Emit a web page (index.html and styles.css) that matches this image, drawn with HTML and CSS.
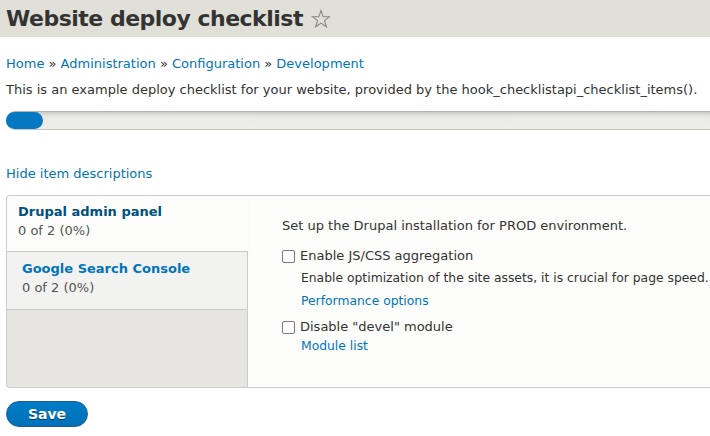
FILE: index.html
```html
<!DOCTYPE html>
<html>
<head>
<meta charset="utf-8">
<link rel="stylesheet" href="styles.css">
</head>
<body>
<div class="page">
  <header class="page-header">
    <h1 class="page-title">Website deploy checklist</h1>
    <svg class="star" width="20" height="20" viewBox="0 0 20 20"><path d="M10 1.5 L12.2 7.6 L18.6 7.7 L13.5 11.6 L15.4 17.8 L10 14.1 L4.6 17.8 L6.5 11.6 L1.4 7.7 L7.8 7.6 Z" fill="none" stroke="#8a8a86" stroke-width="1.1" stroke-linejoin="miter"/></svg>
  </header>
  <main class="content">
    <nav class="breadcrumb">
      <a href="#">Home</a> » <a href="#">Administration</a> » <a href="#">Configuration</a> » <a href="#">Development</a>
    </nav>
    <p class="intro">This is an example deploy checklist for your website, provided by the hook_checklistapi_checklist_items().</p>
    <div class="progress"><div class="progress-fill"></div></div>
    <a class="toggle" href="#">Hide item descriptions</a>
    <div class="vtabs">
      <ul class="vtabs-menu">
        <li class="vtab selected">
          <a href="#" class="vtab-title">Drupal admin panel</a>
          <span class="vtab-summary">0 of 2 (0%)</span>
        </li>
        <li class="vtab">
          <a href="#" class="vtab-title">Google Search Console</a>
          <span class="vtab-summary">0 of 2 (0%)</span>
        </li>
      </ul>
      <div class="vtabs-pane">
        <p class="pane-desc">Set up the Drupal installation for PROD environment.</p>
        <div class="item">
          <label class="item-label"><input type="checkbox" class="cb"> Enable JS/CSS aggregation</label>
          <div class="item-desc">Enable optimization of the site assets, it is crucial for page speed.</div>
          <a class="item-link" href="#">Performance options</a>
        </div>
        <div class="item item-tight">
          <label class="item-label"><input type="checkbox" class="cb"> Disable "devel" module</label>
          <a class="item-link item-link-tight" href="#">Module list</a>
        </div>
      </div>
    </div>
    <button class="save">Save</button>
  </main>
</div>
</body>
</html>
```
FILE: styles.css
```css
html, body {
  margin: 0;
  padding: 0;
  overflow: hidden;
  background: #fff;
}
body {
  font-family: "DejaVu Sans", "Liberation Sans", sans-serif;
  font-size: 13px;
  color: #333;
}
a {
  color: #0074bd;
  text-decoration: none;
}
.page {
  width: 740px;
}
.page-header {
  background: #e0e0d8;
  height: 37px;
  display: flex;
  align-items: center;
  padding-left: 6px;
}
.page-title {
  margin: 0;
  font-size: 22px;
  font-weight: bold;
  color: #333;
  line-height: 37px;
  letter-spacing: -0.5px;
}
.star {
  margin-left: 8px;
  margin-top: 0;
}
.content {
  padding: 0 0 0 6px;
}
.breadcrumb {
  margin-top: 19px;
  line-height: 16px;
  color: #333;
}
.intro {
  margin: 10px 0 0;
  line-height: 16px;
}
.progress {
  margin-top: 13px;
  height: 17px;
  border-radius: 9px 0 0 9px;
  background: linear-gradient(#dcdcd8, #ebebe7 40%, #ededea);
  border-top: 1px solid #b4b4b0;
  border-bottom: 1px solid #c4c4c0;
  box-shadow: inset 0 2px 2px rgba(0,0,0,0.08);
  position: relative;
}
.progress-fill {
  width: 37px;
  height: 17px;
  border-radius: 9px;
  background: #0678c1;
  position: absolute;
  left: 0;
  top: 0;
}
.toggle {
  display: block;
  margin-top: 36px;
  line-height: 16px;
}
.vtabs {
  margin-top: 13px;
  display: flex;
  border: 1px solid #ccc;
  border-right: none;
  border-radius: 4px 0 0 4px;
  height: 191px;
  background: #fcfcfa;
  overflow: hidden;
}
.vtabs-menu {
  list-style: none;
  margin: 0;
  padding: 0;
  width: 240px;
  flex: none;
  background: #e6e5e1;
  border-right: 1px solid #ccc;
  display: flex;
  flex-direction: column;
}
.vtab {
  height: 58px;
  padding: 7px 0 0 15px;
  box-sizing: border-box;
  background: #f2f2f0;
  border-bottom: 1px solid #ccc;
  display: flex;
  flex-direction: column;
}
.vtab.selected {
  height: 56px;
  padding: 6px 0 0 11px;
  background: #fcfcfa;
  margin-right: -1px;
  border-bottom: 1px solid #ccc;
  box-shadow: 0 2px 2px rgba(0,0,0,0.04);
}
.vtab-title {
  font-weight: bold;
  line-height: 19px;
}
.vtab.selected .vtab-title {
  color: #004f80;
}
.vtab-summary {
  color: #555;
  line-height: 19px;
}
.vtabs-pane {
  flex: 1;
  padding: 22px 0 0 34px;
  color: #333;
}
.pane-desc {
  margin: 0;
  line-height: 16px;
}
.item {
  margin-top: 14px;
}
.item-label {
  display: flex;
  align-items: center;
  line-height: 16px;
}
.cb {
  appearance: none;
  -webkit-appearance: none;
  width: 13px;
  height: 13px;
  margin: 0 5px 0 0;
  border: 1px solid #7a7a78;
  border-radius: 2px;
  background: #fff;
  box-sizing: border-box;
}
.item-desc {
  margin: 6px 0 0 19px;
  font-size: 12.35px;
  line-height: 16px;
  white-space: nowrap;
}
.item-link {
  display: block;
  margin: 7px 0 0 19px;
  font-size: 12.35px;
  line-height: 16px;
}
.item-tight {
  margin-top: 10px;
}
.item-link-tight {
  margin-top: 3px;
}
.save {
  margin-top: 13px;
  display: block;
  width: 82px;
  height: 26px;
  border-radius: 20px;
  border: 1px solid #1e5c90;
  background: linear-gradient(#007bc6, #0071b8);
  color: #fff;
  font-family: "DejaVu Sans", sans-serif;
  font-weight: bold;
  font-size: 14px;
  text-shadow: 0 1px rgba(0,0,0,0.5);
  padding: 0;
  box-sizing: border-box;
}
```
